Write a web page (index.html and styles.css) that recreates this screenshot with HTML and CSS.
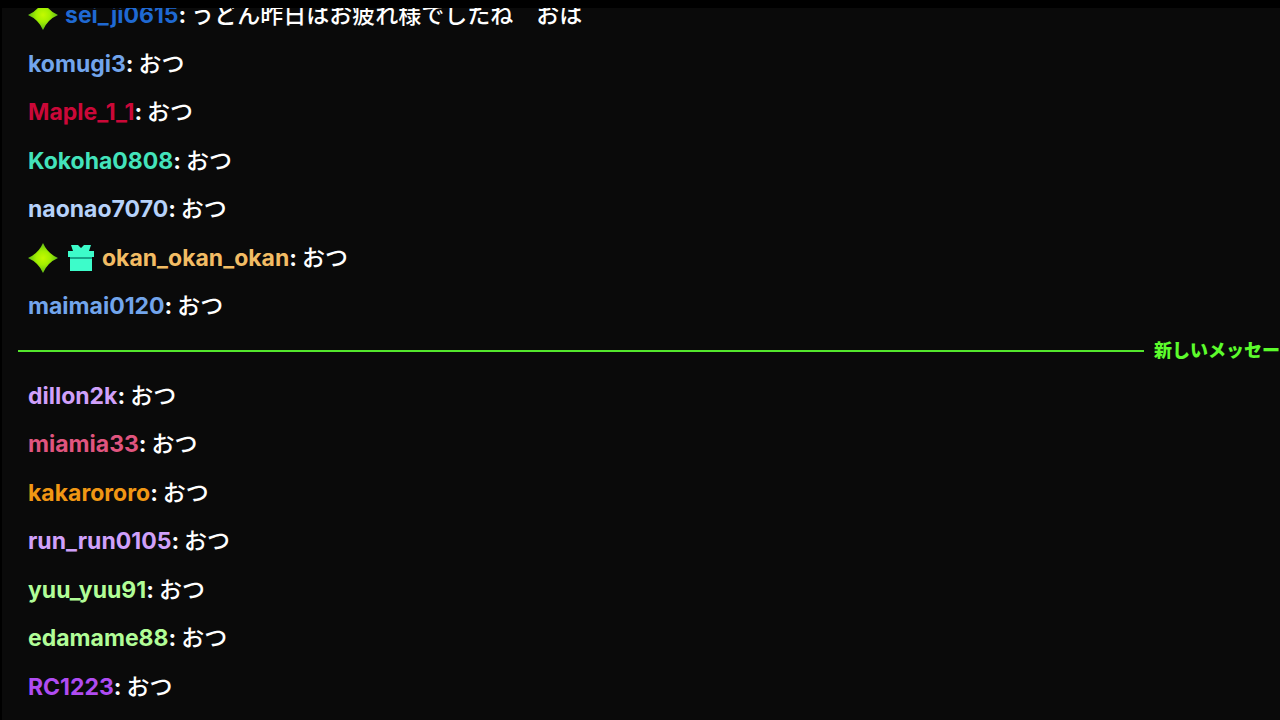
FILE: index.html
```html
<!DOCTYPE html>
<html lang="ja">
<head>
  <meta charset="UTF-8" />
  <meta name="viewport" content="width=device-width, initial-scale=1.0" />
  <title>Chat</title>
  <link rel="stylesheet" href="styles.css">
</head>
<body>
  <!-- Badge shapes -->
  <svg class="defs" aria-hidden="true">
    <defs>
      <radialGradient id="sparkFill">
        <stop offset="0" stop-color="#c4fa00" />
        <stop offset="0.45" stop-color="#a4f000" />
        <stop offset="1" stop-color="#5cb818" />
      </radialGradient>
      <symbol id="spark" viewBox="0 0 30 30">
        <path fill="url(#sparkFill)" d="M15 0 Q19.500 10.500 30 15 Q19.500 19.500 15 30 Q10.500 19.500 0 15 Q10.500 10.500 15 0Z" />
      </symbol>
      <symbol id="gift" viewBox="0 0 26 26">
        <path fill="#3dfcca" d="M3 0 L10 0 L13 3 L16 0 L23 0 L21 6 L26 6 L26 12 L0 12 L0 6 L5 6Z" />
        <path fill="#17a58a" d="M2 12 H24 V15 H2Z" />
        <path fill="#3dfcca" d="M2 14 H24 V26 H2Z" />
      </symbol>
    </defs>
  </svg>

  <main class="chat">
    <div class="messages">
      <div class="message"><svg class="badge spark"><use href="#spark" /></svg><span class="name blue">sei_ji0615</span><span class="colon">:</span> <span class="text">うどん昨日はお疲れ様でしたね　おは</span></div>
      <div class="message"><span class="name sky">komugi3</span><span class="colon">:</span> <span class="text">おつ</span></div>
      <div class="message"><span class="name red">Maple_1_1</span><span class="colon">:</span> <span class="text">おつ</span></div>
      <div class="message"><span class="name teal">Kokoha0808</span><span class="colon">:</span> <span class="text">おつ</span></div>
      <div class="message"><span class="name pale">naonao7070</span><span class="colon">:</span> <span class="text">おつ</span></div>
      <div class="message"><svg class="badge spark"><use href="#spark" /></svg><svg class="badge gift"><use href="#gift" /></svg><span class="name gold">okan_okan_okan</span><span class="colon">:</span> <span class="text">おつ</span></div>
      <div class="message"><span class="name sky">maimai0120</span><span class="colon">:</span> <span class="text">おつ</span></div>

      <div class="divider"><span>新しいメッセー</span></div>

      <div class="message"><span class="name lilac">dillon2k</span><span class="colon">:</span> <span class="text">おつ</span></div>
      <div class="message"><span class="name pink">miamia33</span><span class="colon">:</span> <span class="text">おつ</span></div>
      <div class="message"><span class="name orange">kakarororo</span><span class="colon">:</span> <span class="text">おつ</span></div>
      <div class="message"><span class="name lilac">run_run0105</span><span class="colon">:</span> <span class="text">おつ</span></div>
      <div class="message"><span class="name green">yuu_yuu91</span><span class="colon">:</span> <span class="text">おつ</span></div>
      <div class="message"><span class="name green">edamame88</span><span class="colon">:</span> <span class="text">おつ</span></div>
      <div class="message"><span class="name purple">RC1223</span><span class="colon">:</span> <span class="text">おつ</span></div>
    </div>
  </main>
</body>
</html>
```
FILE: styles.css
```css
* { box-sizing: border-box; }
body { margin: 0; padding: 8px 0 0 2px; height: 100vh; background: #000; color: #fff; font-family: Inter, "Noto Sans CJK JP", sans-serif; overflow: hidden; }
.defs { position: absolute; width: 0; height: 0; }

.chat { display: flex; flex-direction: column; justify-content: flex-end; height: 100%; padding: 0 0 9px 16px; background: #0a0a0a; overflow: hidden; }
.messages { display: flex; flex-direction: column; flex: 0 0 100vh; }
.message { display: flex; flex: 1; align-items: center; padding-left: 10px; font-size: 23px; line-height: 32px; white-space: nowrap; }
.name, .colon { font-weight: 700; }
.text { margin-left: 5px; font-weight: 500; }

.badge { flex: none; }
.spark { width: 30px; height: 30px; margin-right: 7px; }
.gift { width: 26px; height: 26px; margin: 0 8px 0 3px; }

.divider { display: flex; flex: 0 0 41px; align-items: center; gap: 10px; color: #5cfc2c; font-size: 18px; font-weight: 900; line-height: 24px; white-space: nowrap; }
.divider::before { content: ""; flex: 1; height: 2px; background: #53e62c; }

.blue { color: #1f69d2; }
.sky { color: #72a5ec; }
.red { color: #cb0838; }
.teal { color: #43e3bb; }
.pale { color: #b6d2fa; }
.gold { color: #f2bc64; }
.lilac { color: #d0a0fa; }
.pink { color: #e0557f; }
.orange { color: #f09714; }
.green { color: #b1fd97; }
.purple { color: #b04cf2; }
```
